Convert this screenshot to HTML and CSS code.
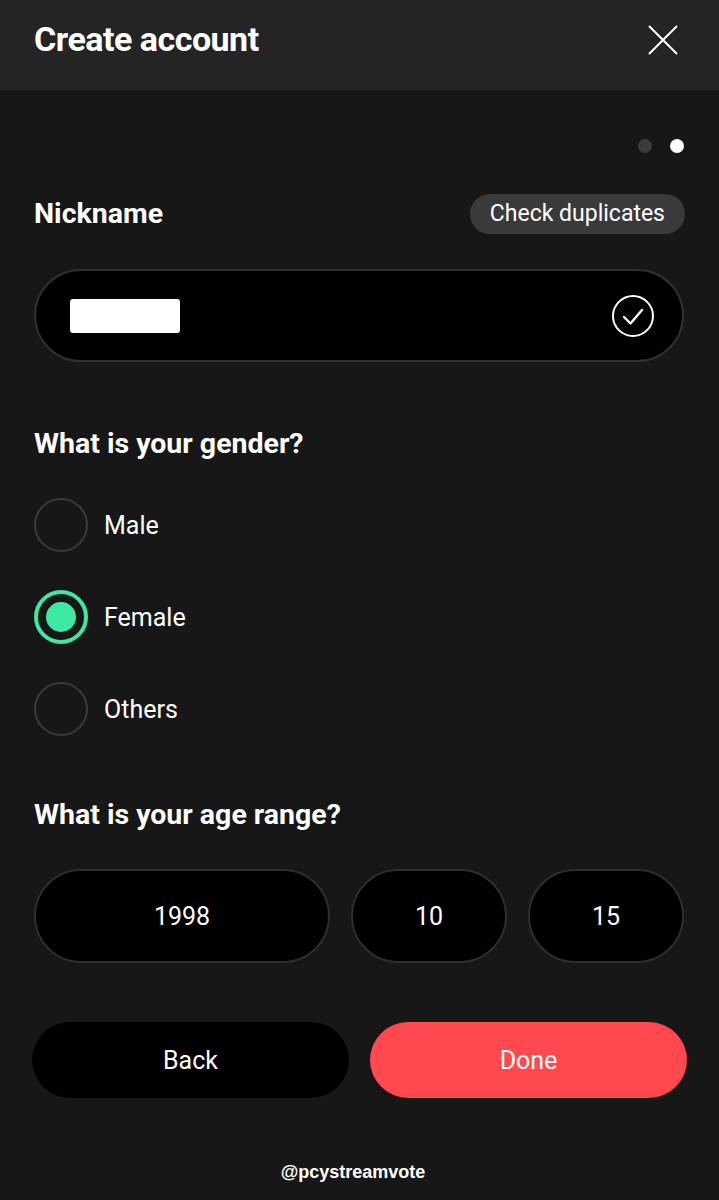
FILE: index.html
```html
<!DOCTYPE html>
<html>
<head lang="en">
    <meta charset="UTF-8">
    <title>Create account</title>
    <link rel="stylesheet" href="styles.css">
</head>
<body>
<div id="frame">
    <div class="header">
        <h1 class="title">Create account</h1>
        <svg class="close" width="30" height="30" viewBox="0 0 30 30">
            <path d="M1 1 L29 29 M29 1 L1 29" stroke="#fff" stroke-width="2" fill="none"/>
        </svg>
    </div>

    <div class="content">
        <div class="steps">
            <span class="dot"></span>
            <span class="dot on"></span>
        </div>

        <div class="field-head">
            <h2 class="label">Nickname</h2>
            <span class="check-btn">Check duplicates</span>
        </div>
        <div class="nick-input">
            <span class="redact"></span>
            <svg class="ok" width="44" height="44" viewBox="0 0 44 44">
                <circle cx="22" cy="22" r="20" stroke="#fff" stroke-width="2" fill="none"/>
                <path d="M13 23 L19.5 29.5 L31 16" stroke="#fff" stroke-width="2.4" fill="none" stroke-linecap="round" stroke-linejoin="round"/>
            </svg>
        </div>

        <h2 class="label gender-label">What is your gender?</h2>
        <div class="radios">
            <div class="radio-row"><span class="radio"></span><span class="radio-text">Male</span></div>
            <div class="radio-row"><span class="radio checked"></span><span class="radio-text">Female</span></div>
            <div class="radio-row"><span class="radio"></span><span class="radio-text">Others</span></div>
        </div>

        <h2 class="label age-label">What is your age range?</h2>
        <div class="ages">
            <span class="age year">1998</span>
            <span class="age">10</span>
            <span class="age">15</span>
        </div>

        <div class="actions">
            <span class="btn back">Back</span>
            <span class="btn done">Done</span>
        </div>

        <div class="credit">@pcystreamvote</div>
    </div>
</div>
</body>
</html>
```

FILE: styles.css
```css
* {
    box-sizing: border-box;
}

body {
    margin: 0;
    background: #171717;
    color: #fff;
    font-family: Roboto, "Liberation Sans", sans-serif;
}

#frame {
    width: 719px;
    min-height: 1200px;
    background: #171717;
}

.header {
    height: 90px;
    background: #242424;
    display: flex;
    align-items: center;
    justify-content: space-between;
    padding: 0 41px 12px 34px;
}

.title {
    margin: 0;
    font-size: 34px;
    font-weight: 700;
    letter-spacing: -0.5px;
    line-height: 40px;
}

.close {
    margin-top: 2px;
}

.content {
    padding: 0 35px 0 34px;
}

.steps {
    display: flex;
    justify-content: flex-end;
    gap: 18px;
    margin-top: 49px;
}

.dot {
    width: 14px;
    height: 14px;
    border-radius: 50%;
    background: #3c3c3c;
}

.dot.on {
    background: #fff;
}

.field-head {
    display: flex;
    justify-content: space-between;
    align-items: center;
    margin-top: 41px;
    margin-right: -1px;
}

.label {
    margin: 0;
    font-size: 28.5px;
    font-weight: 700;
    line-height: 30px;
}

.check-btn {
    height: 40px;
    line-height: 40px;
    padding: 0 20px;
    border-radius: 20px;
    background: #3a3a3a;
    font-size: 23px;
}

.nick-input {
    margin-top: 35px;
    height: 93px;
    background: #000;
    border: 2px solid #303030;
    border-radius: 47px;
    display: flex;
    align-items: center;
    justify-content: space-between;
    padding: 0 27px 0 34px;
}

.redact {
    width: 110px;
    height: 34px;
    background: #fff;
    border-radius: 3px;
}

.gender-label {
    margin-top: 67px;
}

.radios {
    margin-top: 39px;
    display: flex;
    flex-direction: column;
    gap: 38px;
}

.radio-row {
    display: flex;
    align-items: center;
    height: 54px;
}

.radio {
    width: 54px;
    height: 54px;
    border-radius: 50%;
    border: 2px solid #3a3a3a;
    margin-right: 16px;
    display: flex;
    align-items: center;
    justify-content: center;
}

.radio.checked {
    border: 4px solid #3fe8a2;
}

.radio.checked::after {
    content: "";
    width: 30px;
    height: 30px;
    border-radius: 50%;
    background: #3fe8a2;
}

.radio-text {
    font-size: 25px;
}

.age-label {
    margin-top: 64px;
}

.ages {
    margin-top: 39px;
    display: flex;
    gap: 21px;
}

.age {
    flex: 0 0 156px;
    height: 94px;
    background: #000;
    border: 2px solid #2e2e2e;
    border-radius: 47px;
    display: flex;
    align-items: center;
    justify-content: center;
    font-size: 25px;
}

.age.year {
    flex: 1;
}

.actions {
    margin: 59px -3px 0 -2px;
    display: flex;
    gap: 21px;
}

.btn {
    flex: 1;
    height: 76px;
    border-radius: 38px;
    display: flex;
    align-items: center;
    justify-content: center;
    font-size: 25px;
}

.back {
    background: #000;
}

.done {
    background: #ff494e;
}

.credit {
    margin-top: 64px;
    text-align: center;
    font-family: "Liberation Sans", Arial, sans-serif;
    font-weight: 700;
    font-size: 18px;
    padding-right: 12px;
}
```
